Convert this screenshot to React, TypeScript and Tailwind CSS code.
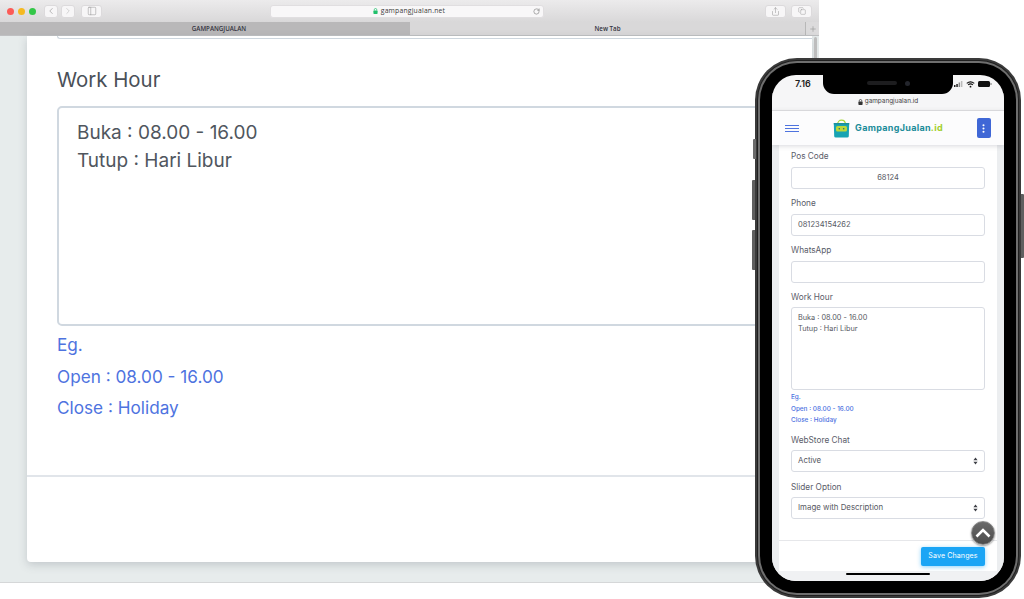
import React from "react";
import { ChevronLeft, ChevronRight, PanelLeft, Share, Copy, RotateCw, Plus, MoreVertical } from "lucide-react";

const ToolBtn = ({ children, w = "w-[14px]" }: { children: React.ReactNode; w?: string }) => (
  <div className={`${w} h-[13px] bg-[#f7f6f7] rounded-[3px] border border-[#dcdadc] flex items-center justify-center text-[#8e8e8e]`}>{children}</div>
);

const SolidLock = ({ color, size = 6 }: { color: string; size?: number }) => (
  <svg width={size} height={size + 1} viewBox="0 0 6 7">
    <path d="M1.5 3 V2 a1.5 1.5 0 0 1 3 0 V3" fill="none" stroke={color} strokeWidth="0.9" />
    <rect x="0.5" y="3" width="5" height="4" rx="0.7" fill={color} />
  </svg>
);

function Browser() {
  return (
    <div className="w-[819px] h-[583px] flex flex-col border-b border-[#d5d7d8] overflow-hidden">
      <div className="h-[22px] shrink-0 bg-gradient-to-b from-[#ecebec] to-[#d9d8d9] flex items-center pl-[7px] pr-[7px] relative">
        <div className="flex gap-[4px] items-center">
          <span className="w-[7px] h-[7px] rounded-full bg-[#fc5b57]" />
          <span className="w-[7px] h-[7px] rounded-full bg-[#f5b921]" />
          <span className="w-[7px] h-[7px] rounded-full bg-[#33c748]" />
        </div>
        <div className="flex gap-[3px] ml-[8px]">
          <ToolBtn><ChevronLeft size={10} strokeWidth={1.5} /></ToolBtn>
          <ToolBtn><ChevronRight size={10} strokeWidth={1.5} className="text-[#bcbcbc]" /></ToolBtn>
        </div>
        <div className="ml-[6px]"><ToolBtn w="w-[21px]"><PanelLeft size={10} strokeWidth={1.2} /></ToolBtn></div>
        <div className="w-[274px] h-[13px] ml-[168px] pl-[4px] bg-[#f8f7f8] rounded-[3px] border border-[#e0dee0] flex items-center justify-center relative">
          <span className="mr-[3px] flex"><SolidLock color="#21c06c" size={5} /></span>
          <span className="text-[6.8px] text-[#3b3b3b] font-['Open_Sans',sans-serif] tracking-[0.2px]">gampangjualan.net</span>
          <RotateCw size={7} className="text-[#777] absolute right-[3px] top-[2px]" />
        </div>
        <div className="ml-auto flex gap-[5px]">
          <ToolBtn w="w-[21px]"><Share size={9} strokeWidth={1.3} /></ToolBtn>
          <ToolBtn w="w-[21px]"><Copy size={8} strokeWidth={1.3} /></ToolBtn>
        </div>
      </div>
      <div className="h-[14px] shrink-0 flex text-[6.2px] font-['Open_Sans',sans-serif] text-[#34343f] font-semibold border-b border-[#bfc0c2]">
        <div className="w-[410px] bg-[#b9b8b9] flex items-center justify-center pl-[28px]">GAMPANGJUALAN</div>
        <div className="flex-1 bg-[#d9d8d9] flex items-center justify-center">New Tab</div>
        <div className="w-[14px] bg-[#dcdbdc] border-l border-[#b8b8b8] flex items-center justify-center text-[#9a9a9a]"><Plus size={8} /></div>
      </div>
      <div className="flex-1 flex bg-[#e7ecec] min-h-0">
        <div className="ml-[27px] w-[785px] h-[526px] bg-white rounded-b-[4px] shadow-[0_3px_8px_rgba(90,100,110,0.25)] flex flex-col pl-[30px] font-['Inter',sans-serif]">
          <div className="h-[3px] w-[755px] border-b border-l border-[#cdd6de] rounded-bl-[4px] shrink-0" />
          <div className="text-[20.4px] leading-[26px] text-[#4a5058] mt-[28px]">Work Hour</div>
          <div className="mt-[13px] w-[725px] h-[220px] border-2 border-[#d0d8e0] rounded-[5px] pl-[18px] pt-[11px] text-[19px] leading-[28px] text-[#50565e]">
            <div>Buka : 08.00 - 16.00</div>
            <div>Tutup : Hari Libur</div>
          </div>
          <div className="mt-[3px] text-[17.2px] text-[#4e73df] leading-[31.5px]">
            <div>Eg.</div>
            <div>Open : 08.00 - 16.00</div>
            <div>Close : Holiday</div>
          </div>
          <div className="-ml-[30px] mt-[51px] border-t-2 border-[#e1e5ea]" />
        </div>
        <div className="w-[7px] flex justify-center pt-[1px]">
          <div className="w-[3px] h-[22px] rounded-full bg-[#bdbdbd]" />
        </div>
      </div>
    </div>
  );
}

const Label = ({ children, className = "" }: { children: React.ReactNode; className?: string }) => (
  <div className={`text-[8.25px] leading-[11px] text-[#5a5c69] ${className}`}>{children}</div>
);

const Field = ({ value, center }: { value?: string; center?: boolean }) => (
  <div className={`mt-[5px] h-[22px] border border-[#d9dce3] rounded-[3px] flex items-center px-[6px] text-[7.5px] text-[#565862] ${center ? "justify-center" : ""}`}>{value}</div>
);

const SelectField = ({ value }: { value: string }) => (
  <div className="mt-[4px] h-[22px] border border-[#d9dce3] rounded-[3px] flex items-center justify-between px-[6px] text-[7.85px] text-[#565862]">
    <span>{value}</span>
    <svg width="5" height="8" viewBox="0 0 5 8"><path d="M2.5 0.5 L4.6 3.2 H0.4 Z M2.5 7.5 L4.6 4.8 H0.4 Z" fill="#3d3f46" /></svg>
  </div>
);

const Logo = () => (
  <svg width="17" height="20" viewBox="0 0 17 20">
    <path d="M4.5 7 C4.5 0.5 12.5 0.5 12.5 7" fill="none" stroke="#a8d63a" strokeWidth="1.2" />
    <path d="M0.8 5 H16.2 L15.8 18.3 Q15.8 19.5 14 19.5 H3 Q1.2 19.5 1.2 18.3 Z" fill="#17a3b2" />
    <path d="M0.8 5 H16.2 V6.5 H0.8 Z" fill="#1a8f9c" />
    <rect x="3" y="8" width="11" height="5.5" rx="1.5" fill="#b9d83a" />
    <circle cx="6.3" cy="10.7" r="0.8" fill="#1b6f74" />
    <circle cx="10.7" cy="10.7" r="0.8" fill="#1b6f74" />
  </svg>
);

function Phone() {
  return (
    <div className="absolute left-[755px] top-[58px] w-[266px] h-[540px]">
      <div className="absolute -left-[2px] top-[81px] w-[3px] h-[20px] bg-[#6a6a6a] rounded-l-[1px]" />
      <div className="absolute -left-[3px] top-[122px] w-[3px] h-[40px] bg-[#5f5f5f] rounded-l-[1px]" />
      <div className="absolute -left-[3px] top-[172px] w-[3px] h-[40px] bg-[#5f5f5f] rounded-l-[1px]" />
      <div className="absolute -right-[3px] top-[136px] w-[3px] h-[64px] bg-[#5f5f5f] rounded-r-[1px]" />
      <div className="w-full h-full rounded-[42px] bg-[#3a3a3a] p-[2px]">
        <div className="w-full h-full rounded-[40px] bg-[#1f1f1f] p-[1px]">
          <div className="w-full h-full rounded-[39px] bg-[#6e6e6e] p-[2px]">
            <div className="w-full h-full rounded-[37px] bg-[#000] p-[12px]">
              <div className="relative w-full h-full rounded-[24px] bg-[#f6f6f7] overflow-hidden flex flex-col font-['Inter',sans-serif]">
                <div className="absolute left-[51px] top-0 w-[130px] h-[19px] bg-black rounded-b-[11px] flex items-center justify-center gap-[8px] pb-[3px]">
                  <span className="w-[30px] h-[4px] rounded-full bg-[#1d1d1f]" />
                  <span className="w-[5px] h-[5px] rounded-full bg-[#23252c]" />
                </div>
                <div className="h-[18px] shrink-0 flex items-center pl-[23px] pr-[12px] justify-between text-[#222]">
                  <span className="text-[9px] font-semibold">7.16</span>
                  <div className="relative z-10 flex items-center gap-[3px]">
                    <svg width="9" height="6" viewBox="0 0 9 6"><rect x="0" y="4" width="1.5" height="2" fill="#222" /><rect x="2.3" y="3" width="1.5" height="3" fill="#222" /><rect x="4.6" y="1.5" width="1.5" height="4.5" fill="#888" /><rect x="6.9" y="0" width="1.5" height="6" fill="#bbb" /></svg>
                    <svg width="9" height="7" viewBox="0 0 12 9"><path d="M1 3 Q6 -1 11 3 M2.8 5 Q6 2.4 9.2 5" fill="none" stroke="#111" strokeWidth="1.5" /><circle cx="6" cy="7.4" r="1.2" fill="#111" /></svg>
                    <svg width="14" height="6" viewBox="0 0 14 6"><rect x="0" y="0" width="12" height="6" rx="1.5" fill="#111" /><rect x="12.5" y="2" width="1" height="2" fill="#777" /></svg>
                  </div>
                </div>
                <div className="h-[18px] shrink-0 bg-[#f6f6f7] border-b border-[#e2e2e4] flex items-center justify-center gap-[2px] text-[6.4px] text-[#444]">
                  <SolidLock color="#333" size={5} />
                  <span>gampangjualan.id</span>
                </div>
                <div className="relative z-10 h-[34px] shrink-0 bg-[#fcfcfd] shadow-[0_1px_5px_rgba(60,60,80,0.2)] flex items-center pl-[13px] pr-[13px] justify-between">
                  <div className="flex flex-col gap-[2px] w-[14px]">
                    <span className="h-px bg-[#4e73df]" /><span className="h-px bg-[#4e73df]" /><span className="h-px bg-[#4e73df]" />
                  </div>
                  <div className="flex items-center gap-[5px]">
                    <Logo />
                    <span className="text-[9px] font-bold tracking-[0.3px] text-[#1d8c9a]">GampangJualan<span className="text-[#a3cf2b]">.id</span></span>
                  </div>
                  <div className="w-[14px] h-[20px] rounded-[2px] bg-[#3f67d6] flex items-center justify-center">
                    <MoreVertical size={11} strokeWidth={2.5} className="text-white" />
                  </div>
                </div>
                <div className="flex-1 bg-[#eceef0] px-[7px] min-h-0 relative">
                  <div className="bg-white h-full flex flex-col">
                    <div className="px-[12px] pt-[6px] flex-1 min-h-0">
                      <Label>Pos Code</Label>
                      <Field value="68124" center />
                      <Label className="mt-[9px]">Phone</Label>
                      <Field value="081234154262" />
                      <Label className="mt-[9px]">WhatsApp</Label>
                      <Field />
                      <Label className="mt-[9px]">Work Hour</Label>
                      <div className="mt-[4px] h-[83px] border border-[#d9dce3] rounded-[3px] px-[6px] py-[4px] text-[7.3px] leading-[11px] text-[#565862]">
                        <div>Buka : 08.00 - 16.00</div>
                        <div>Tutup : Hari Libur</div>
                      </div>
                      <div className="mt-[2px] text-[6.4px] leading-[11.7px] text-[#4e73df] font-medium">
                        <div>Eg.</div>
                        <div>Open : 08.00 - 16.00</div>
                        <div>Close : Holiday</div>
                      </div>
                      <Label className="mt-[8px]">WebStore Chat</Label>
                      <SelectField value="Active" />
                      <Label className="mt-[10px]">Slider Option</Label>
                      <SelectField value="Image with Description" />
                    </div>
                    <div className="h-[31px] shrink-0 border-t border-[#e6e7ea] flex justify-end items-start pt-[6px] pr-[12px]">
                      <div className="w-[64px] h-[19px] rounded-[2px] bg-[#1ba5f5] shadow-[0_1px_4px_rgba(27,165,245,0.5)] text-white text-[7.1px] tracking-[0.1px] flex items-center justify-center">Save Changes</div>
                    </div>
                  </div>
                  <div className="absolute left-[199px] top-[376px] w-[24px] h-[24px] rounded-full bg-gradient-to-b from-[#6a6a6a] to-[#4c4c4c] border border-[#8a8a8a] shadow-[0_1px_2px_rgba(0,0,0,0.4)] flex items-center justify-center">
                    <svg width="16" height="10" viewBox="0 0 16 10"><path d="M1.5 8.5 L8 2 L14.5 8.5" fill="none" stroke="#fff" strokeWidth="2.6" /></svg>
                  </div>
                </div>
                <div className="h-[10px] shrink-0 bg-[#f0f1f3] flex items-start justify-center pt-[2px]">
                  <span className="w-[84px] h-[2px] rounded-full bg-black" />
                </div>
              </div>
            </div>
          </div>
        </div>
      </div>
    </div>
  );
}

export default function App() {
  return (
    <div className="relative w-[1024px] h-[599px] bg-white overflow-hidden">
      <Browser />
      <Phone />
    </div>
  );
}
